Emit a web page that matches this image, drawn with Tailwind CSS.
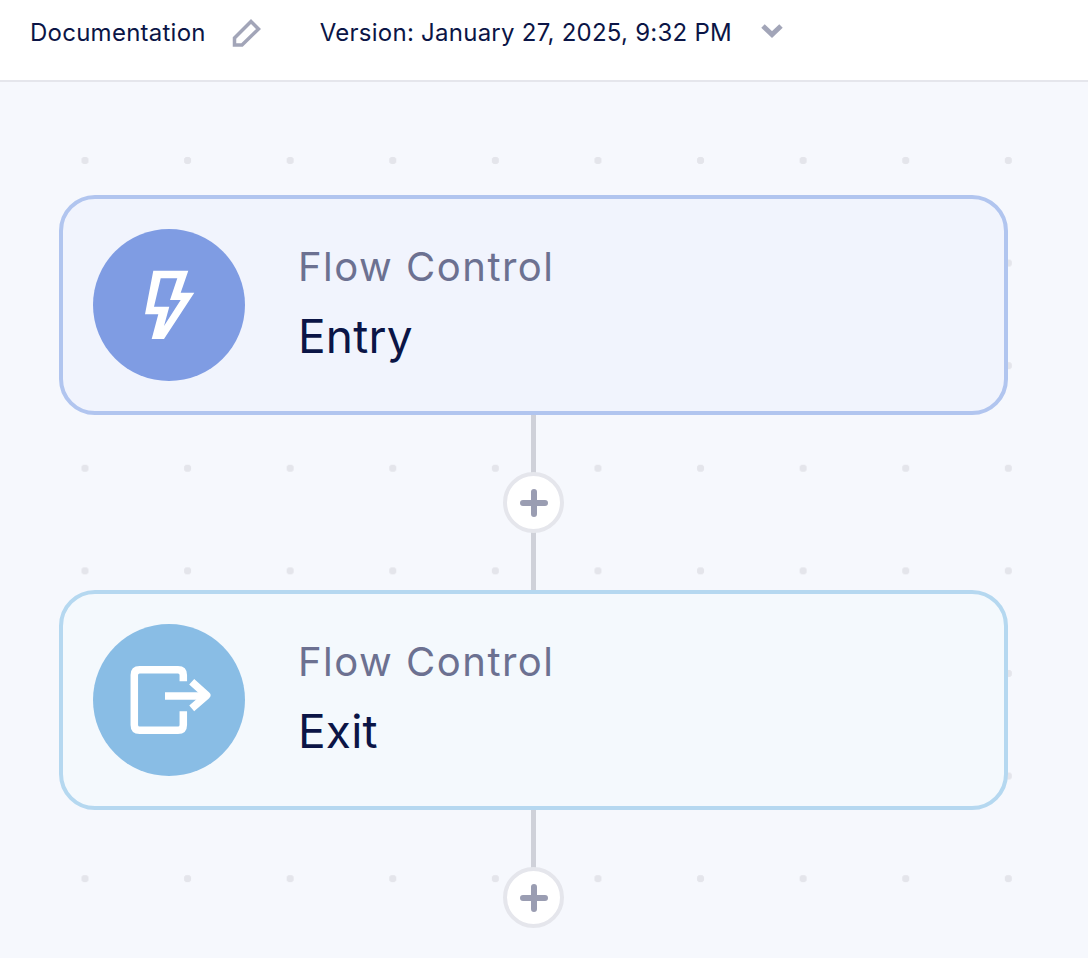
<!DOCTYPE html>
<html lang="en">
<head>
  <meta charset="UTF-8" />
  <title>Flow</title>
  <script src="https://cdn.jsdelivr.net/npm/@tailwindcss/browser@4"></script>
</head>
<body class="bg-white font-[Inter,sans-serif] text-[#0b1546] overflow-hidden">
  <div class="flex flex-col h-[958px]">
    <!-- Header -->
    <header class="flex items-center h-[82px] shrink-0 pl-[30px] pb-[15px] bg-white border-b-2 border-[#e5e6ec] text-[24px] tracking-[0.25px]">
      <span>Documentation</span>
      <svg class="ml-[25px] w-[30px] h-[30px]" viewBox="0 0 30 30" fill="none" stroke="#a2a5b8" stroke-width="3.5">
        <path d="M3.5 27 L3.5 20 L20 3.5 L27.5 11 L11 27 Z" />
      </svg>
      <span class="ml-[59px]">Version: January 27, 2025, 9:32 PM</span>
      <svg class="ml-[28px] mb-[4px] w-[24px] h-[16px]" viewBox="0 0 24 16" fill="none" stroke="#a2a5b8" stroke-width="5">
        <path d="M3 3 L12 11.5 L21 3" />
      </svg>
    </header>

    <!-- Canvas -->
    <main class="flex-1 flex flex-col pl-[59px] pr-[80px] pt-[113px] bg-[#f6f8fd] bg-[radial-gradient(circle,#e4e5eb_3.5px,transparent_4px)] bg-[size:102.6px_102.6px] bg-position-[33.7px_27.2px]">
      <!-- Entry node -->
      <div class="flex items-center h-[220px] shrink-0 rounded-[36px] border-4 border-[#b1c5ef] bg-[#f1f4fd] pl-[30px]">
        <div class="w-[152px] h-[152px] rounded-full bg-[#7f9ce3] shrink-0">
          <svg viewBox="0 0 152 152" class="w-full h-full">
            <path fill="#fff" fill-rule="evenodd" d="M60.3 41.7 H95.3 L87.7 63.7 H101.3 L71 110 H58.7 L65.3 85.3 H52 Z M67.7 49.3 L61 77.7 H76.3 L71 97 L87.7 71 H77 L84.3 49.3 Z" />
          </svg>
        </div>
        <div class="ml-[53px] mb-[8px]">
          <p class="text-[40px] leading-[48px] tracking-[1.5px] text-[#6c7191]">Flow Control</p>
          <p class="mt-[21px] text-[46px] leading-[48px] tracking-[0.2px]">Entry</p>
        </div>
      </div>

      <!-- Connector -->
      <div class="relative h-[175px] shrink-0 w-[5px] ml-[472px] bg-[#cfd1d9]">
        <button class="absolute left-[-28px] top-[57px] flex items-center justify-center w-[61px] h-[61px] rounded-full border-4 border-[#e5e6ec] bg-white">
          <svg viewBox="0 0 30 30" class="w-[30px] h-[30px]" fill="none" stroke="#9a9db2" stroke-width="6" stroke-linecap="round">
            <path d="M15 4 V26 M4 15 H26" />
          </svg>
        </button>
      </div>

      <!-- Exit node -->
      <div class="flex items-center h-[220px] shrink-0 rounded-[36px] border-4 border-[#b5d8f0] bg-[#f4f9fd] pl-[30px]">
        <div class="w-[152px] h-[152px] rounded-full bg-[#89bde5] shrink-0">
          <svg viewBox="0 0 152 152" class="w-full h-full" fill="none" stroke="#fff" stroke-width="7.5">
            <path d="M90.3 57.3 V51 Q90.3 45.7 85 45.7 H46.6 Q41.3 45.7 41.3 51 V101 Q41.3 106.3 46.6 106.3 H85 Q90.3 106.3 90.3 101 V87.3" />
            <path d="M72 72 H112" />
            <path stroke-linejoin="round" d="M98.7 57.7 L113.7 71.3 L98.7 84.3" />
          </svg>
        </div>
        <div class="ml-[53px] mb-[8px]">
          <p class="text-[40px] leading-[48px] tracking-[1.5px] text-[#6c7191]">Flow Control</p>
          <p class="mt-[21px] text-[46px] leading-[48px] tracking-[0.2px]">Exit</p>
        </div>
      </div>

      <!-- Connector to next -->
      <div class="relative h-[62px] shrink-0 w-[5px] ml-[472px] bg-[#cfd1d9]">
        <button class="absolute left-[-28px] top-[57px] flex items-center justify-center w-[61px] h-[61px] rounded-full border-4 border-[#e5e6ec] bg-white">
          <svg viewBox="0 0 30 30" class="w-[30px] h-[30px]" fill="none" stroke="#9a9db2" stroke-width="6" stroke-linecap="round">
            <path d="M15 4 V26 M4 15 H26" />
          </svg>
        </button>
      </div>
    </main>
  </div>
</body>
</html>
